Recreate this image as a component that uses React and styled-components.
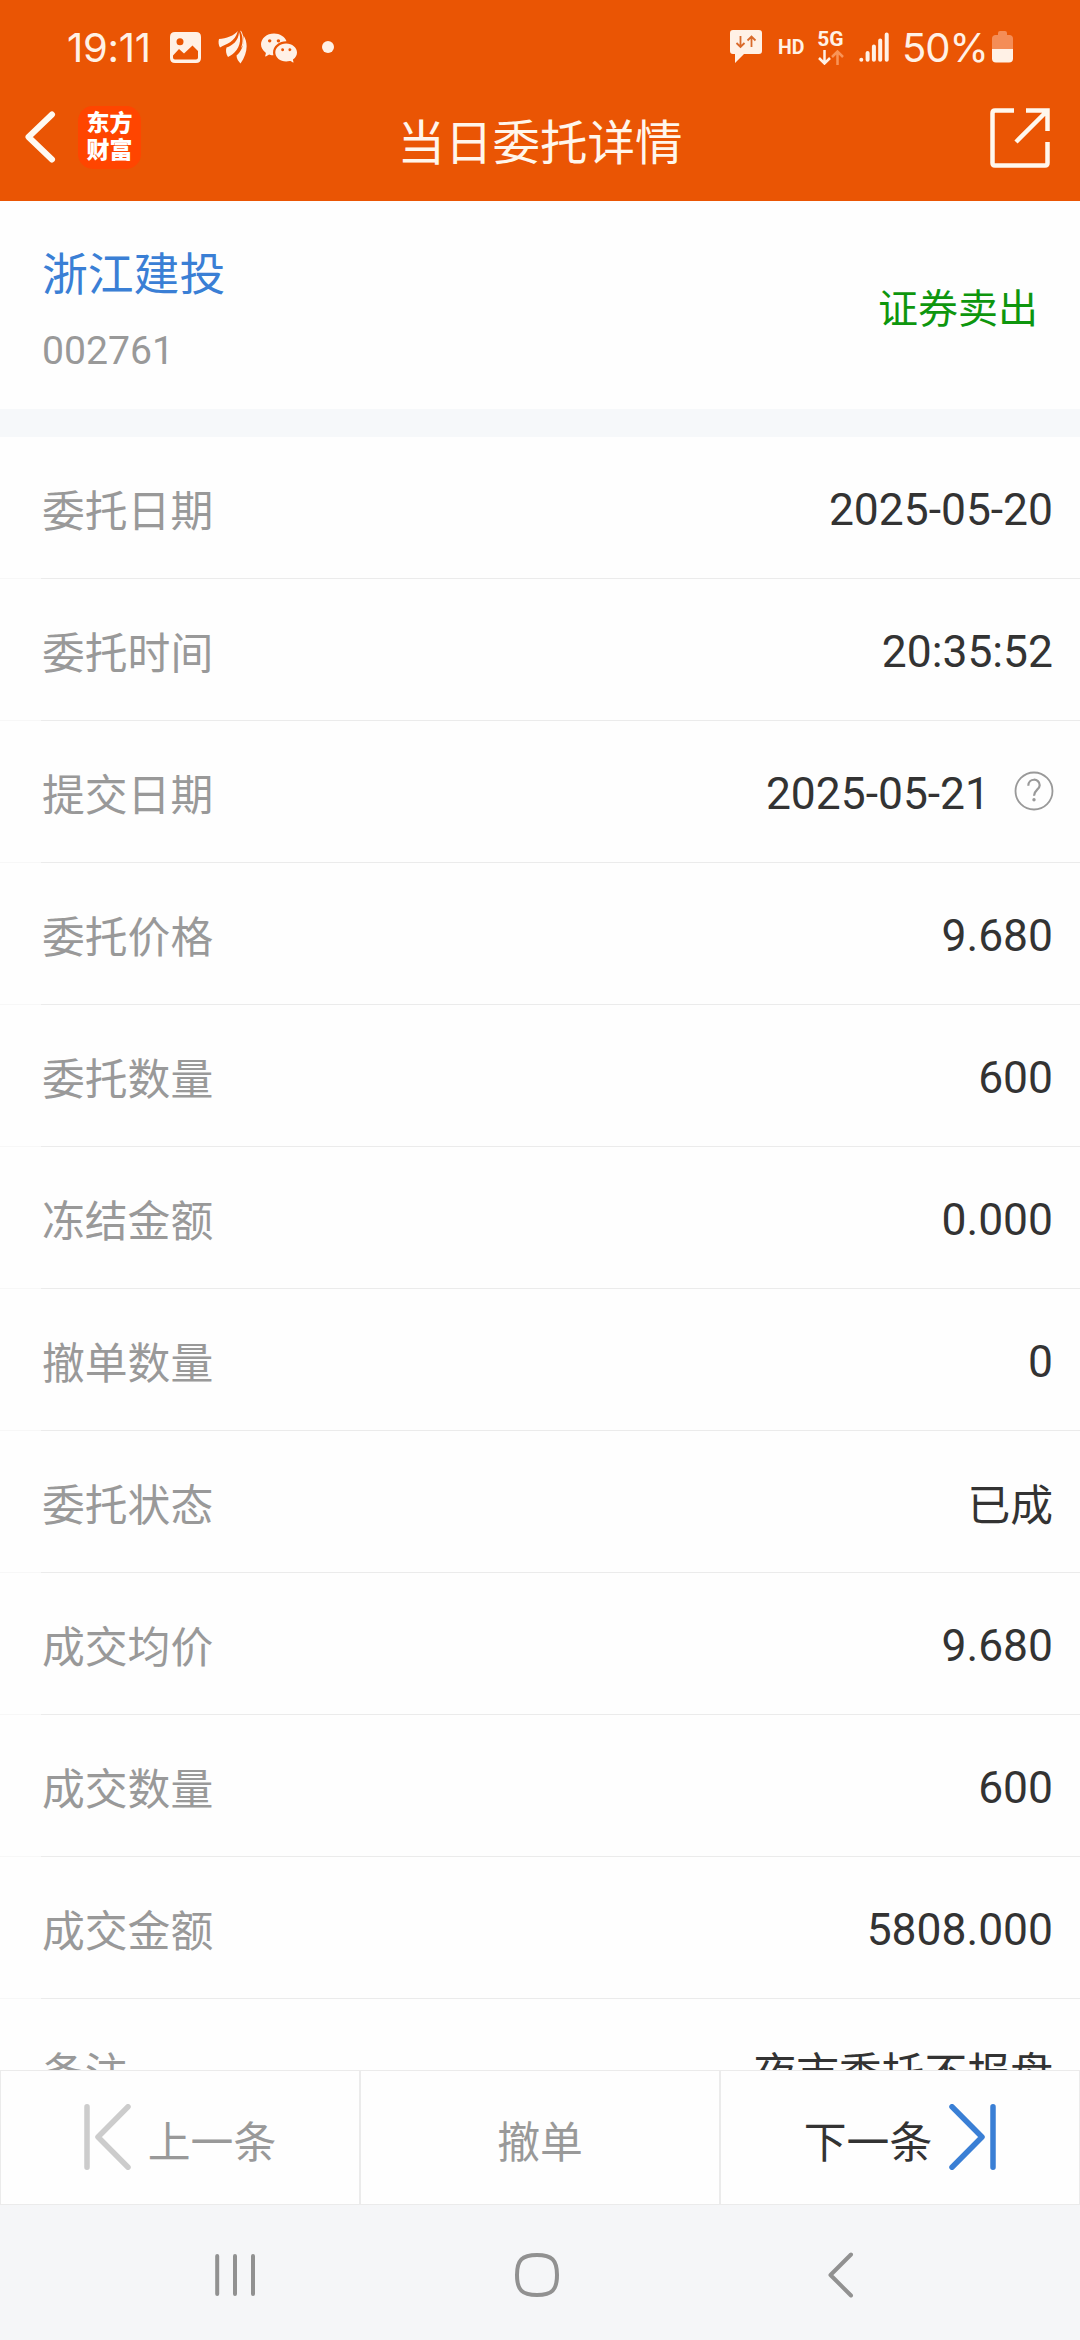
import React from 'react';
import styled, { createGlobalStyle, css } from 'styled-components';
import { BsWechat } from 'react-icons/bs';

const orders = [
  { label: '委托日期', value: '2025-05-20' },
  { label: '委托时间', value: '20:35:52' },
  { label: '提交日期', value: '2025-05-21', help: true },
  { label: '委托价格', value: '9.680' },
  { label: '委托数量', value: '600' },
  { label: '冻结金额', value: '0.000' },
  { label: '撤单数量', value: '0' },
  { label: '委托状态', value: '已成', cjk: true },
  { label: '成交均价', value: '9.680' },
  { label: '成交数量', value: '600' },
  { label: '成交金额', value: '5808.000' },
  { label: '备注', value: '夜市委托不报盘', cjk: true },
];

const GlobalStyle = createGlobalStyle`
  * {
    box-sizing: border-box;
  }

  body {
    margin: 0;
    background: #fefefe;
    font-family: Roboto, "Noto Sans CJK SC", sans-serif;
  }

  svg {
    display: block;
    flex: none;
  }
`

const Screen = styled.div`
  width: 1080px;
  height: 2340px;
  display: flex;
  flex-direction: column;
  overflow: hidden;
`

const Header = styled.header`
  height: 201px;
  flex: none;
  background: #ea5504;
  color: #fff6ec;
`

const StatusBar = styled.div`
  height: 94px;
  padding: 0 67px 0 67px;
  display: flex;
  align-items: center;
  justify-content: space-between;
  color: #fff1e6;
`

const StatusGroup = styled.div`
  height: 94px;
  display: flex;
  align-items: center;
`

const Clock = styled.span`
  width: 103px;
  font-family: Inter, sans-serif;
  font-size: 40px;
  font-weight: 400;
  line-height: 95px;
  letter-spacing: -0.3px;
  white-space: nowrap;
`

const Percent = styled.span`
  width: 89px;
  padding-left: 12px;
  font-family: Inter, sans-serif;
  font-size: 40px;
  font-weight: 400;
  line-height: 95px;
  letter-spacing: -1px;
  white-space: nowrap;
`

const Hd = styled.span`
  width: 55px;
  padding: 1px 0 0 16px;
  font-size: 19.5px;
  font-weight: 700;
  line-height: 94px;
`

const Network = styled.div`
  width: 27px;
  padding-top: 2px;
  display: flex;
  flex-direction: column;
  align-items: center;
  font-size: 21px;
  font-weight: 700;
  line-height: 17px;
  gap: 2px;
`

const Gap = styled.i`
  width: ${({ $w }) => $w}px;
`

const TitleBar = styled.div`
  height: 107px;
  padding: 0 30px 0 24px;
  display: grid;
  grid-template-columns: 1fr auto 1fr;
  align-items: center;
`

const TitleLeft = styled.div`
  display: flex;
  align-items: center;
  gap: 22px;
  padding-bottom: 21px;
`

const TitleRight = styled.div`
  display: flex;
  justify-content: flex-end;
  padding-bottom: 20px;
`

const Title = styled.h1`
  margin: 0;
  padding: 0 0 8px 6px;
  font-size: 47.5px;
  font-weight: 400;
  line-height: 70px;
`

const Logo = styled.div`
  width: 63px;
  height: 63px;
  border-radius: 15px;
  background: #ff4500;
  color: #fff;
  display: grid;
  align-content: center;
  justify-content: center;
  font-size: 23px;
  font-weight: 900;
  line-height: 27px;
`

const Stock = styled.section`
  height: 208px;
  flex: none;
  padding: 0 42px;
  display: flex;
  justify-content: space-between;
`

const StockName = styled.div`
  margin-top: 41px;
  color: #3a7fd5;
  font-size: 45.8px;
  line-height: 68px;
`

const StockCode = styled.div`
  margin-top: 18px;
  color: #999;
  font-size: 39.2px;
  line-height: 46px;
`

const Side = styled.div`
  margin-top: 79px;
  color: #0e960e;
  font-size: 40px;
  line-height: 60px;
`

const Divider = styled.div`
  height: 28px;
  flex: none;
  background: #f6f8fa;
`

const List = styled.main`
  height: 1633px;
  flex: none;
  overflow: hidden;
`

const Row = styled.div`
  height: 142px;
  padding: 0 27px 0 42px;
  display: flex;
  justify-content: space-between;
  align-items: center;
  border-bottom: 1px solid;
  border-image: linear-gradient(to right, #f7f7f7 42px, #ebebeb 42px) 1;
`

const Label = styled.span`
  padding-top: 8px;
  color: #999;
  font-size: 42.8px;
  line-height: 64px;
`

const Value = styled.span`
  display: flex;
  align-items: center;
  color: #333;
  font-size: 44.4px;
  line-height: 64px;
  padding-top: 4px;

  ${({ $cjk }) => $cjk && css`
    padding-top: 8px;
    font-size: 42.8px;
  `}

  svg {
    margin: -5px -1px 0 24px;
  }
`

const Actions = styled.footer`
  height: 135px;
  flex: none;
  display: grid;
  grid-template-columns: repeat(3, 1fr);
`

const Action = styled.button`
  padding: 0;
  border: 1px solid #ebebeb;
  background: #fefefe;
  display: flex;
  align-items: center;
  justify-content: center;
  gap: 17px;
  color: ${({ $active }) => ($active ? '#333' : '#999')};
  font: 42.8px/64px "Noto Sans CJK SC", sans-serif;

  span {
    padding-top: 3px;
  }

  svg {
    margin-bottom: 1px;
  }
`

const NavBar = styled.nav`
  flex: 1;
  padding: 5px 226px 0 214px;
  display: grid;
  grid-template-columns: 300px 46px 1fr;
  align-items: center;
  background: #f5f6f8;

  svg:last-child {
    justify-self: end;
  }
`

const PictureIcon = () => (
  <svg width="31" height="31" viewBox="0 0 31 31">
    <path
      fill="currentColor"
      fillRule="evenodd"
      d="M5 0H26Q31 0 31 5V26Q31 31 26 31H5Q0 31 0 26V5Q0 0 5 0ZM3 23.500V25.500Q3 27.500 5 27.500H26Q28 27.500 28 25.500V19L22.500 13.500L14 21.500L9 17ZM10 6.300A3.500 3.500 0 1 0 10 13.300A3.500 3.500 0 1 0 10 6.300Z"
    />
  </svg>
)

const WingIcon = () => (
  <svg width="29" height="34" viewBox="0 0 29 34" fill="currentColor">
    <path d="M19.800 1C16.500 5.500 8 8.500 1 9C0 12 0.800 15.500 2 17.500C9 13.500 17 12 19.800 1Z" />
    <path d="M21 2C20.500 11 14.500 15.500 8.500 17.500C7.500 20.500 8 24 10 27C16 24 23 18 22 7C21.900 5 21.500 3.500 21 2Z" />
    <path d="M22 0.500C25 6 25.500 12 23 18C28 14 25.500 6 23.500 1.500Z" />
    <path d="M25.500 5.500C30.500 13 29.500 24 22.500 33.500C20.500 31.500 18.500 28.500 18.500 25.500C24 21 26.500 14 25.500 5.500Z" />
  </svg>
)

const MessageIcon = () => (
  <svg width="32" height="34" viewBox="0 0 32 34">
    <path d="M3 0H29Q32 0 32 3V21Q32 24 29 24H14L5 33V24H3Q0 24 0 21V3Q0 0 3 0Z" fill="currentColor" />
    <path d="M10.500 6V16.500M6.500 13L10.500 17L14.500 13M21.500 17V6.500M17.500 10.500L21.500 6.500L25.500 10.500" fill="none" stroke="#d96a2b" strokeWidth="1.800" />
  </svg>
)

const DataArrows = () => (
  <svg width="26" height="15" viewBox="0 0 26 15" fill="none" strokeWidth="2.500">
    <path d="M6.500 0V13.500M1 8L6.500 13.500L12 8" stroke="currentColor" />
    <path d="M19.500 15V1.500M14 7L19.500 1.500L25 7" stroke="#f99457" />
  </svg>
)

const SignalIcon = () => (
  <svg width="30" height="30" viewBox="0 0 30 30" stroke="currentColor" strokeWidth="4" strokeLinecap="round">
    <path d="M2.300 27.700V27.800M8.600 21V27.800M14.900 14.500V27.800M21.200 8.500V27.800M27.700 2.500V27.800" />
  </svg>
)

const BatteryIcon = () => (
  <svg width="21" height="32" viewBox="0 0 21 32">
    <path d="M6 4V2Q6 0 8 0H13Q15 0 15 2V4H18Q21 4.500 21 7.500V18H0V7.500Q0 4.500 3 4Z" fill="#f48d57" />
    <path d="M0 18H21V27.500Q21 31.500 17 31.500H4Q0 31.500 0 27.500Z" fill="currentColor" />
  </svg>
)

const BackIcon = () => (
  <svg width="32" height="52" viewBox="0 0 32 52" fill="none" stroke="#fffaf2" strokeWidth="6" strokeLinecap="round" strokeLinejoin="round">
    <path d="M28 3.500L4.500 26L28 48.500" />
  </svg>
)

const ShareIcon = () => (
  <svg width="60" height="60" viewBox="0 0 60 60" fill="none" stroke="#fff8ee" strokeWidth="4.500">
    <path d="M24 2.500H5Q2.500 2.500 2.500 5V55Q2.500 57.500 5 57.500H55Q57.500 57.500 57.500 55V34" />
    <path d="M36 2.500H57.500V23M57 3L26 34" />
  </svg>
)

const HelpIcon = () => (
  <svg width="40" height="40" viewBox="0 0 40 40" fill="none" stroke="#999">
    <circle cx="20" cy="20" r="18.500" strokeWidth="1.800" />
    <path d="M14.300 14.800C14.300 6.800 25.700 6.800 25.700 14.200C25.700 18.500 20 19 20 24.800" strokeWidth="2.200" />
    <circle cx="20" cy="28.700" r="1.700" fill="#999" stroke="none" />
  </svg>
)

const SkipIcon = ({ color, next }) => (
  <svg width="47" height="66" viewBox="0 0 47 66" fill="none" stroke={color} strokeWidth="5.500" strokeLinecap="round" strokeLinejoin="round">
    {next
      ? <path d="M44 2.800V63.200M3 2.800L33 33L3 63.200" />
      : <path d="M3 2.800V63.200M44 2.800L14 33L44 63.200" />}
  </svg>
)

function App() {
  return (
    <Screen>
      <GlobalStyle />
      <Header>
        <StatusBar>
          <StatusGroup>
            <Clock>19:11</Clock>
            <PictureIcon />
            <Gap $w={17} />
            <WingIcon />
            <Gap $w={14} />
            <BsWechat size={36} />
            <Gap $w={25} />
            <svg width="12" height="12"><circle cx="6" cy="6" r="6" fill="currentColor" /></svg>
          </StatusGroup>
          <StatusGroup>
            <MessageIcon />
            <Hd>HD</Hd>
            <Network>
              5G
              <DataArrows />
            </Network>
            <Gap $w={15} />
            <SignalIcon />
            <Gap $w={1} />
            <Percent>50%</Percent>
            <Gap $w={13} />
            <BatteryIcon />
          </StatusGroup>
        </StatusBar>
        <TitleBar>
          <TitleLeft>
            <BackIcon />
            <Logo>
              <span>东方</span>
              <span>财富</span>
            </Logo>
          </TitleLeft>
          <Title>当日委托详情</Title>
          <TitleRight>
            <ShareIcon />
          </TitleRight>
        </TitleBar>
      </Header>
      <Stock>
        <div>
          <StockName>浙江建投</StockName>
          <StockCode>002761</StockCode>
        </div>
        <Side>证券卖出</Side>
      </Stock>
      <Divider />
      <List>
        {
          orders.map(({ label, value, help, cjk }) => (
            <Row key={label}>
              <Label>{label}</Label>
              <Value $cjk={cjk}>
                {value}
                {help && <HelpIcon />}
              </Value>
            </Row>
          ))
        }
      </List>
      <Actions>
        <Action>
          <SkipIcon color="#ccc" />
          <span>上一条</span>
        </Action>
        <Action>
          <span>撤单</span>
        </Action>
        <Action $active>
          <span>下一条</span>
          <SkipIcon color="#3a7fd5" next />
        </Action>
      </Actions>
      <NavBar>
        <svg width="42" height="44" viewBox="0 0 42 44" stroke="#919191" strokeWidth="4" strokeLinecap="round">
          <path d="M3.200 3V41M21 3V41M39 3V41" />
        </svg>
        <svg width="46" height="46" viewBox="0 0 46 46" fill="none" stroke="#919191" strokeWidth="4">
          <path d="M23 3C38 3 43 8 43 23S38 43 23 43S3 38 3 23S8 3 23 3Z" />
        </svg>
        <svg width="27" height="46" viewBox="0 0 27 46" fill="none" stroke="#919191" strokeWidth="4" strokeLinecap="round" strokeLinejoin="round">
          <path d="M24 2.500L3.500 23L24 43.500" />
        </svg>
      </NavBar>
    </Screen>
  );
}

export default App;
